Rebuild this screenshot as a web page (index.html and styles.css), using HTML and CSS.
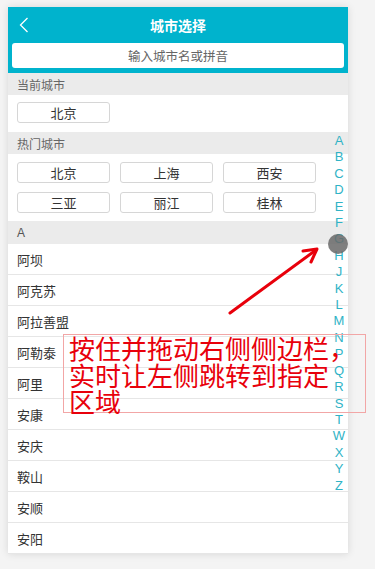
FILE: index.html
```html
<!DOCTYPE html>
<html lang="zh-CN">
<head>
<meta charset="utf-8">
<title>城市选择</title>
<link rel="stylesheet" href="styles.css">
</head>
<body>
<div class="phone">
  <header class="topbar">
    <div class="title-row">
      <svg class="back" width="10" height="16" viewBox="0 0 10 16"><polyline points="8.5,1 1.5,8 8.5,15" fill="none" stroke="#fff" stroke-width="1.3"/></svg>
      <span class="title">城市选择</span>
    </div>
    <div class="search">输入城市名或拼音</div>
  </header>

  <div class="section-head">当前城市</div>
  <div class="current">
    <span class="city-btn">北京</span>
  </div>

  <div class="section-head">热门城市</div>
  <div class="hot">
    <span class="city-btn">北京</span>
    <span class="city-btn">上海</span>
    <span class="city-btn">西安</span>
    <span class="city-btn">三亚</span>
    <span class="city-btn">丽江</span>
    <span class="city-btn">桂林</span>
  </div>

  <div class="section-head letter-head">A</div>
  <ul class="list">
    <li>阿坝</li>
    <li>阿克苏</li>
    <li>阿拉善盟</li>
    <li>阿勒泰</li>
    <li>阿里</li>
    <li>安康</li>
    <li>安庆</li>
    <li>鞍山</li>
    <li>安顺</li>
    <li>安阳</li>
  </ul>

  <ul class="index">
    <li>A</li><li>B</li><li>C</li><li>D</li><li>E</li><li>F</li><li>G</li><li>H</li><li>J</li><li>K</li><li>L</li><li>M</li><li>N</li><li>P</li><li>Q</li><li>R</li><li>S</li><li>T</li><li>W</li><li>X</li><li>Y</li><li>Z</li>
  </ul>
  <div class="drag-dot"></div>
</div>

<svg class="arrow" width="375" height="569" viewBox="0 0 375 569">
  <g fill="none" stroke="#e8000b" stroke-width="3" stroke-linecap="round" stroke-linejoin="round">
    <line x1="230" y1="313" x2="316" y2="250"/>
    <polyline points="303,251 317,249 311,262"/>
  </g>
</svg>

<div class="note">按住并拖动右侧侧边栏，<br>实时让左侧跳转到指定<br>区域</div>
</body>
</html>
```

FILE: styles.css
```css
* { box-sizing: border-box; }

body {
  margin: 0;
  background: #f4f4f4;
  font-family: "Noto Sans CJK SC", "Noto Sans", sans-serif;
  width: 375px;
  height: 569px;
  position: relative;
  overflow: hidden;
}

.phone {
  position: relative;
  margin: 7px 0 0 8px;
  width: 340px;
  height: 547px;
  background: #fff;
  box-shadow: 0 0 8px rgba(0, 0, 0, 0.12);
  overflow: hidden;
}

.topbar {
  background: #00b3cd;
  padding: 0 4px 5px;
}

.title-row {
  height: 36px;
  display: flex;
  align-items: center;
  justify-content: center;
  position: relative;
}

.back {
  position: absolute;
  left: 7px;
  top: 10px;
}

.title {
  color: #fff;
  font-size: 14px;
  font-weight: bold;
}

.search {
  height: 25px;
  background: #fff;
  border-radius: 3px;
  display: flex;
  align-items: center;
  justify-content: center;
  color: #666;
  font-size: 12.5px;
}

.section-head {
  height: 22px;
  background: #ebebeb;
  color: #666;
  font-size: 12px;
  display: flex;
  align-items: center;
  padding-left: 9px;
}

.letter-head {
  height: 23px;
  font-family: "Liberation Sans", Arial, sans-serif;
  font-size: 12px;
  color: #555;
}

.current {
  padding: 7px 9px 8px;
  height: 37px;
}

.city-btn {
  display: flex;
  align-items: center;
  justify-content: center;
  width: 93px;
  height: 21px;
  border: 1px solid #d6d6d6;
  border-radius: 3px;
  font-size: 13px;
  color: #333;
  background: #fff;
}

.hot {
  display: grid;
  grid-template-columns: repeat(3, 93px);
  column-gap: 10px;
  row-gap: 9px;
  padding: 8px 9px 8px;
  height: 67px;
}

.list {
  list-style: none;
  margin: 0;
  padding: 0;
}

.list li {
  height: 31px;
  border-bottom: 1px solid #e6e6e6;
  display: flex;
  align-items: center;
  padding-left: 9px;
  font-size: 13px;
  color: #333;
}

.index {
  position: absolute;
  right: 0;
  top: 126px;
  width: 18px;
  margin: 0;
  padding: 0;
  list-style: none;
  text-align: center;
  font-family: "Liberation Sans", Arial, sans-serif;
  font-size: 13px;
  line-height: 16.4px;
  color: #2fb3c6;
}

.drag-dot {
  position: absolute;
  left: 320px;
  top: 227px;
  width: 20px;
  height: 20px;
  border-radius: 50%;
  background: rgba(105, 105, 105, 0.85);
}

.arrow {
  position: absolute;
  left: 0;
  top: 0;
}

.note {
  position: absolute;
  left: 63px;
  top: 334px;
  width: 303px;
  height: 79px;
  border: 1px solid #f2a6a6;
  padding: 0 0 0 5px;
  color: #e8000b;
  font-size: 26px;
  line-height: 26.5px;
  white-space: nowrap;
}
```
